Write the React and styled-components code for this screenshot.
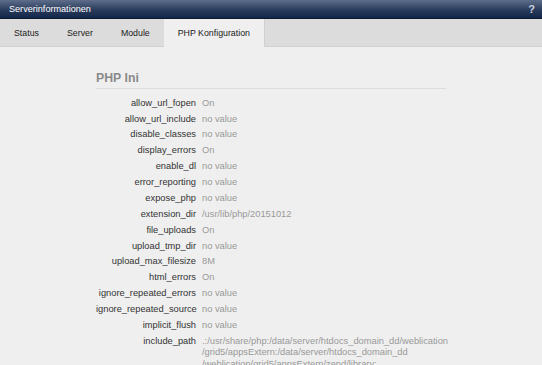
import React from "react";
import styled, { createGlobalStyle } from "styled-components";

const GlobalStyle = createGlobalStyle`
  html, body {
    margin: 0;
    padding: 0;
    background: #efefef;
    font-family: "Liberation Sans", Arial, sans-serif;
    overflow: hidden;
  }
`;

const Page = styled.div`
  width: 542px;
  height: 365px;
  display: flex;
  flex-direction: column;
  background: #efefef;
  overflow: hidden;
`;

const TitleBar = styled.div`
  flex-shrink: 0;
  height: 19px;
  display: flex;
  align-items: center;
  justify-content: space-between;
  padding: 0 7px 0 9px;
  background: linear-gradient(#5d6d8a, #2a3c5c 55%, #12264a);
  border-bottom: 1px solid #0a1934;
  box-sizing: border-box;
`;

const Title = styled.span`
  color: #ffffff;
  font-size: 9.1px;
`;

const Help = styled.span`
  color: #c9d1de;
  font-size: 11px;
  font-weight: bold;
`;

const TabBar = styled.div`
  flex-shrink: 0;
  height: 28px;
  display: flex;
  background: #dcdcdc;
  border-bottom: 1px solid #d0d0d0;
  box-sizing: border-box;
`;

const Tab = styled.div`
  display: flex;
  align-items: center;
  padding: 0 14px;
  font-size: 8.8px;
  color: #222;
  background: ${(p) => (p.$active ? "#efefef" : "transparent")};
  border-right: ${(p) => (p.$active ? "1px solid #d0d0d0" : "none")};
  margin-bottom: ${(p) => (p.$active ? "-1px" : "0")};
`;

const Content = styled.div`
  flex-shrink: 0;
  padding: 24px 0 0 96px;
  width: 350px;
`;

const Heading = styled.h2`
  margin: 0;
  font-size: 12.3px;
  line-height: 14px;
  font-weight: bold;
  color: #8a8a8a;
  padding-bottom: 3px;
  border-bottom: 1px solid #dcdcdc;
`;

const Table = styled.div`
  display: grid;
  grid-template-columns: 100px 1fr;
  column-gap: 6px;
  margin-top: 6.5px;
  font-size: 9.3px;
  line-height: 11.5px;
`;

const Key = styled.div`
  text-align: right;
  color: #333;
  padding: 2.2px 0;
`;

const Value = styled.div`
  color: #999;
  padding: 2.2px 0;
  white-space: nowrap;
`;

const rows = [
  ["allow_url_fopen", "On"],
  ["allow_url_include", "no value"],
  ["disable_classes", "no value"],
  ["display_errors", "On"],
  ["enable_dl", "no value"],
  ["error_reporting", "no value"],
  ["expose_php", "no value"],
  ["extension_dir", "/usr/lib/php/20151012"],
  ["file_uploads", "On"],
  ["upload_tmp_dir", "no value"],
  ["upload_max_filesize", "8M"],
  ["html_errors", "On"],
  ["ignore_repeated_errors", "no value"],
  ["ignore_repeated_source", "no value"],
  ["implicit_flush", "no value"],
  [
    "include_path",
    [
      ".:/usr/share/php:/data/server/htdocs_domain_dd/weblication",
      "/grid5/appsExtern:/data/server/htdocs_domain_dd",
      "/weblication/grid5/appsExtern/zend/library:",
    ],
  ],
];

const tabs = ["Status", "Server", "Module", "PHP Konfiguration"];

export default function App() {
  return (
    <Page>
      <GlobalStyle />
      <TitleBar>
        <Title>Serverinformationen</Title>
        <Help>?</Help>
      </TitleBar>
      <TabBar>
        {tabs.map((t) => (
          <Tab key={t} $active={t === "PHP Konfiguration"}>
            {t}
          </Tab>
        ))}
      </TabBar>
      <Content>
        <Heading>PHP Ini</Heading>
        <Table>
          {rows.map(([k, v]) => (
            <React.Fragment key={k}>
              <Key>{k}</Key>
              <Value>
                {Array.isArray(v)
                  ? v.map((line, i) => (
                      <React.Fragment key={i}>
                        {i > 0 && <br />}
                        {line}
                      </React.Fragment>
                    ))
                  : v}
              </Value>
            </React.Fragment>
          ))}
        </Table>
      </Content>
    </Page>
  );
}
